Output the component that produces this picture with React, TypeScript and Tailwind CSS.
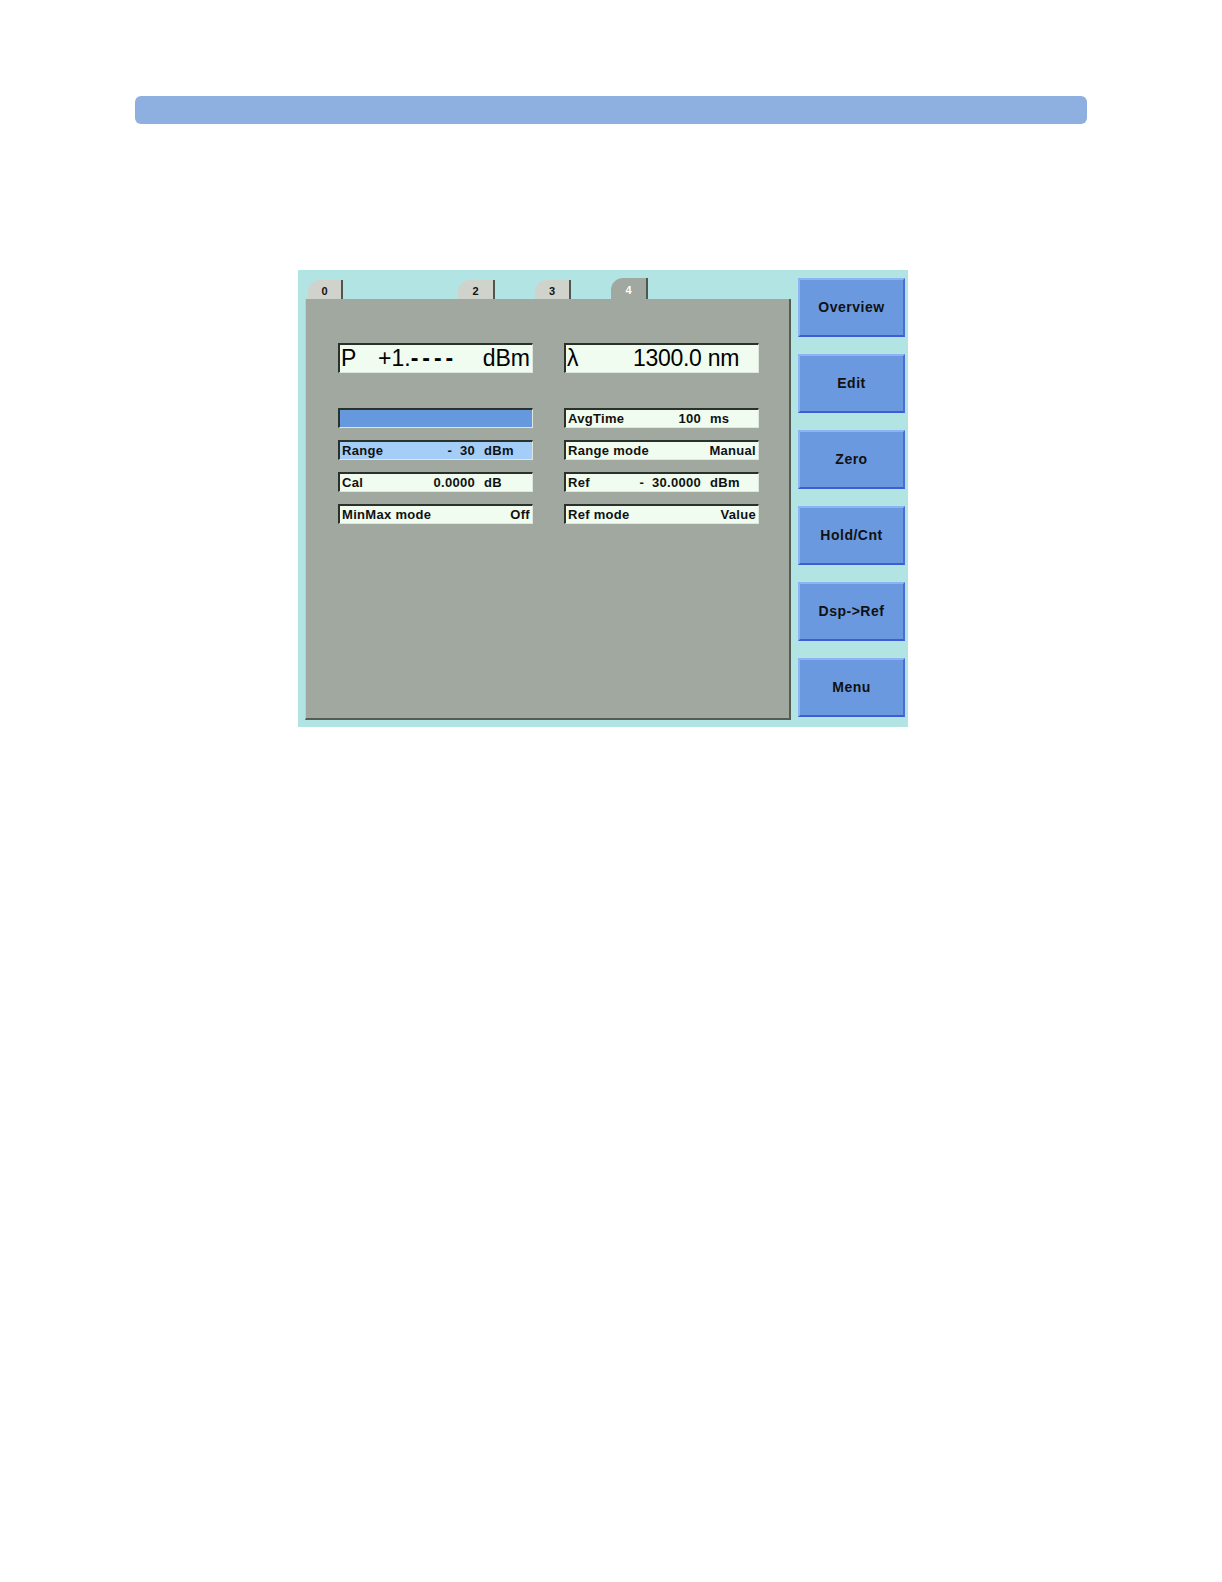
import React from "react";

type Field = {
  label: string;
  num?: string;
  unit?: string;
  right?: string;
  tone?: "plain" | "blue" | "light";
};

const leftFields: Field[] = [
  { label: "", tone: "blue" },
  { label: "Range", num: "-  30", unit: "dBm", tone: "light" },
  { label: "Cal", num: "0.0000", unit: "dB" },
  { label: "MinMax mode", right: "Off" },
];

const rightFields: Field[] = [
  { label: "AvgTime", num: "100", unit: "ms" },
  { label: "Range mode", right: "Manual" },
  { label: "Ref", num: "-  30.0000", unit: "dBm" },
  { label: "Ref mode", right: "Value" },
];

const buttons = ["Overview", "Edit", "Zero", "Hold/Cnt", "Dsp->Ref", "Menu"];

const SmallField = ({ f }: { f: Field }) => {
  const bg =
    f.tone === "blue"
      ? "bg-[#6698dd]"
      : f.tone === "light"
      ? "bg-[#a4cdf8]"
      : "bg-[#effcef]";
  return (
    <div
      className={`h-[20px] w-[195px] flex items-center border-t-2 border-l-2 border-b border-r border-t-[#2a302a] border-l-[#2a302a] border-b-[#dfe6de] border-r-[#dfe6de] text-[13px] font-bold tracking-[0.3px] text-[#111] leading-none ${bg}`}
    >
      {f.tone === "blue" ? null : f.right ? (
        <div className="flex w-full pl-[2px] pr-[2px]">
          <span className="flex-1 whitespace-pre">{f.label}</span>
          <span>{f.right}</span>
        </div>
      ) : (
        <div className="grid w-full grid-cols-[1fr_auto_57px] pl-[2px]">
          <span className="whitespace-pre">{f.label}</span>
          <span className="whitespace-pre text-right">{f.num}</span>
          <span className="pl-[9px]">{f.unit}</span>
        </div>
      )}
    </div>
  );
};

const BigField = ({ children }: { children: React.ReactNode }) => (
  <div className="h-[30px] w-[195px] flex items-center border-t-2 border-l-2 border-b border-r border-t-[#2a302a] border-l-[#2a302a] border-b-[#dfe6de] border-r-[#dfe6de] bg-[#effcef] text-[23px] leading-none text-black">
    {children}
  </div>
);

const Tab = ({
  label,
  active,
  className,
}: {
  label: string;
  active?: boolean;
  className: string;
}) => (
  <div
    className={`flex items-center justify-center rounded-tl-[12px] border-r-2 border-[#4f5750] text-[11px] font-bold leading-none ${
      active
        ? "h-[21px] bg-[#a1a89f] text-white"
        : "h-[19px] bg-[#d0d3cc] text-[#111]"
    } ${className}`}
  >
    <span className="pt-[3px]">{label}</span>
  </div>
);

export default function App() {
  return (
    <div
      className="w-full bg-white pt-[96px] pb-[200px]"
      style={{ fontFamily: '"Liberation Sans", Arial, sans-serif' }}
    >
      <div className="mx-[135px] h-[28px] rounded-[6px] bg-[#8eb0e0]" />

      <div className="ml-[298px] mt-[146px] flex h-[457px] w-[610px] bg-[#b1e4e3]">
        {/* left: tabs + panel */}
        <div className="ml-[7px] flex w-[486px] flex-col">
          <div className="mt-[8px] flex h-[21px] items-end">
            <Tab label="0" className="ml-[3px] w-[35px]" />
            <Tab label="2" className="ml-[115px] w-[37px]" />
            <Tab label="3" className="ml-[40px] w-[36px]" />
            <Tab label="4" active className="ml-[40px] w-[37px]" />
          </div>
          <div className="flex h-[421px] flex-col border-l border-b-2 border-r-2 border-l-[#c3cac2] border-b-[#555c55] border-r-[#555c55] bg-[#a1a89f] pl-[32px] pt-[44px]">
            <div className="flex gap-[31px]">
              <BigField>
                <span className="pl-[1px] w-[38px]">P</span>
                <span>+1.</span>
                <span className="font-bold tracking-[4px]">----</span>
                <span className="ml-auto pr-[2px]">dBm</span>
              </BigField>
              <BigField>
                <span className="pl-[1px]">λ</span>
                <span className="ml-auto pr-[19px] tracking-[-0.3px]">1300.0 nm</span>
              </BigField>
            </div>
            <div className="mt-[35px] flex gap-[31px]">
              <div className="flex flex-col gap-[12px]">
                {leftFields.map((f, i) => (
                  <SmallField key={i} f={f} />
                ))}
              </div>
              <div className="flex flex-col gap-[12px]">
                {rightFields.map((f, i) => (
                  <SmallField key={i} f={f} />
                ))}
              </div>
            </div>
          </div>
        </div>

        {/* right: softkeys */}
        <div className="ml-[7px] mt-[8px] flex flex-col gap-[17px]">
          {buttons.map((b) => (
            <div
              key={b}
              className="flex h-[59px] w-[107px] items-center justify-center border-2 border-t-[#8cb4f4] border-l-[#8cb4f4] border-b-[#3c5ed2] border-r-[#4a6cd6] bg-[#6a99e0] text-[14px] font-bold tracking-[0.5px] text-[#111]"
            >
              {b}
            </div>
          ))}
        </div>
      </div>
    </div>
  );
}
